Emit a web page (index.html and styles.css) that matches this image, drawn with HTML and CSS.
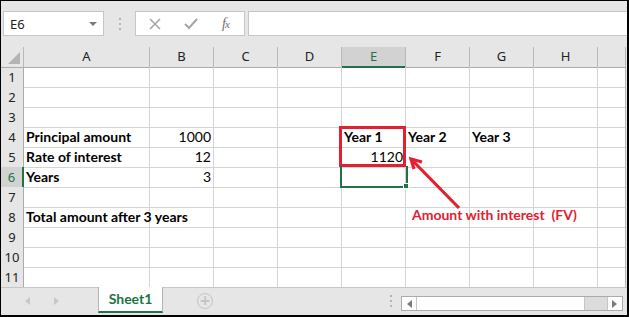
FILE: index.html
```html
<!DOCTYPE html>
<html lang="en">
<head>
    <meta charset="UTF-8">
    <title>Compound interest - Sheet1</title>
    <link rel="stylesheet" href="styles.css">
</head>
<body>
    <div class="window">
        <div class="toolbar">
            <div class="name-box">
                <span>E6</span>
                <span class="caret"></span>
            </div>
            <div class="grip"><i></i><i></i><i></i></div>
            <div class="fx-buttons">
                <svg width="12" height="12" viewBox="0 0 12 12"><path d="M1 1 L11 11 M11 1 L1 11" stroke="#a6a6a6" stroke-width="1.6" fill="none"/></svg>
                <svg width="14" height="12" viewBox="0 0 14 12"><path d="M1 6 L5 10 L13 1" stroke="#a6a6a6" stroke-width="2" fill="none"/></svg>
                <span class="fx">f<sub>x</sub></span>
            </div>
            <div class="formula-input"></div>
        </div>

        <div class="sheet">
            <div class="row head">
                <div class="cell corner"><span class="corner-mark"></span></div>
                <div class="cell">A</div>
                <div class="cell">B</div>
                <div class="cell">C</div>
                <div class="cell">D</div>
                <div class="cell active">E</div>
                <div class="cell">F</div>
                <div class="cell">G</div>
                <div class="cell">H</div>
                <div class="cell"></div>
                <div class="edge"></div>
            </div>
            <div class="row">
                <div class="cell num">1</div>
                <div class="cell"></div><div class="cell"></div><div class="cell"></div><div class="cell"></div><div class="cell"></div><div class="cell"></div><div class="cell"></div><div class="cell"></div><div class="cell"></div>
                <div class="edge"></div>
            </div>
            <div class="row">
                <div class="cell num">2</div>
                <div class="cell"></div><div class="cell"></div><div class="cell"></div><div class="cell"></div><div class="cell"></div><div class="cell"></div><div class="cell"></div><div class="cell"></div><div class="cell"></div>
                <div class="edge"></div>
            </div>
            <div class="row">
                <div class="cell num">3</div>
                <div class="cell"></div><div class="cell"></div><div class="cell"></div><div class="cell"></div><div class="cell"></div><div class="cell"></div><div class="cell"></div><div class="cell"></div><div class="cell"></div>
                <div class="edge"></div>
            </div>
            <div class="row">
                <div class="cell num">4</div>
                <div class="cell bold">Principal amount</div>
                <div class="cell right">1000</div>
                <div class="cell"></div>
                <div class="cell"></div>
                <div class="cell bold">Year 1</div>
                <div class="cell bold">Year 2</div>
                <div class="cell bold">Year 3</div>
                <div class="cell"></div>
                <div class="cell"></div>
                <div class="edge"></div>
            </div>
            <div class="row">
                <div class="cell num">5</div>
                <div class="cell bold">Rate of interest</div>
                <div class="cell right">12</div>
                <div class="cell"></div>
                <div class="cell"></div>
                <div class="cell right">1120</div>
                <div class="cell"></div><div class="cell"></div><div class="cell"></div><div class="cell"></div>
                <div class="edge"></div>
            </div>
            <div class="row">
                <div class="cell num active">6</div>
                <div class="cell bold">Years</div>
                <div class="cell right">3</div>
                <div class="cell"></div><div class="cell"></div><div class="cell"></div><div class="cell"></div><div class="cell"></div><div class="cell"></div><div class="cell"></div>
                <div class="edge"></div>
            </div>
            <div class="row">
                <div class="cell num">7</div>
                <div class="cell"></div><div class="cell"></div><div class="cell"></div><div class="cell"></div><div class="cell"></div><div class="cell"></div><div class="cell"></div><div class="cell"></div><div class="cell"></div>
                <div class="edge"></div>
            </div>
            <div class="row">
                <div class="cell num">8</div>
                <div class="cell bold spill">Total amount after 3 years</div>
                <div class="cell"></div><div class="cell"></div><div class="cell"></div><div class="cell"></div><div class="cell"></div><div class="cell"></div><div class="cell"></div><div class="cell"></div>
                <div class="edge"></div>
            </div>
            <div class="row">
                <div class="cell num">9</div>
                <div class="cell"></div><div class="cell"></div><div class="cell"></div><div class="cell"></div><div class="cell"></div><div class="cell"></div><div class="cell"></div><div class="cell"></div><div class="cell"></div>
                <div class="edge"></div>
            </div>
            <div class="row">
                <div class="cell num">10</div>
                <div class="cell"></div><div class="cell"></div><div class="cell"></div><div class="cell"></div><div class="cell"></div><div class="cell"></div><div class="cell"></div><div class="cell"></div><div class="cell"></div>
                <div class="edge"></div>
            </div>
            <div class="row">
                <div class="cell num">11</div>
                <div class="cell"></div><div class="cell"></div><div class="cell"></div><div class="cell"></div><div class="cell"></div><div class="cell"></div><div class="cell"></div><div class="cell"></div><div class="cell"></div>
                <div class="edge"></div>
            </div>

            <!-- annotations over the grid -->
            <div class="highlight-box"></div>
            <div class="selection"><span class="fill-handle"></span></div>
            <svg class="pointer" width="60" height="60" viewBox="0 0 60 60">
                <path d="M52 54 L5 6" stroke="#e3202f" stroke-width="3.2" fill="none"/>
                <path d="M15 8 L4 5 L7 15" stroke="#e3202f" stroke-width="3.2" fill="none"/>
            </svg>
            <div class="note">Amount with interest&nbsp; (FV)</div>
        </div>

        <div class="tabbar">
            <div class="tab-nav">
                <span class="tri left"></span>
                <span class="tri right"></span>
            </div>
            <div class="tab">Sheet1</div>
            <div class="add-sheet">+</div>
            <div class="grip bottom"><i></i><i></i><i></i></div>
            <div class="hscroll">
                <span class="sbtn"><span class="tri left dark"></span></span>
                <span class="thumb"></span>
                <span class="track"></span>
                <span class="sbtn"><span class="tri right dark"></span></span>
            </div>
        </div>
    </div>
</body>
</html>
```

FILE: styles.css
```css
* {
    margin: 0;
    padding: 0;
    box-sizing: border-box;
}

body {
    background: #fff;
    font-family: 'Lato', 'Liberation Sans', sans-serif;
}

.window {
    width: 629px;
    height: 317px;
    border-top: 1px solid #000;
    border-left: 1px solid #000;
    border-right: 2px solid #000;
    border-bottom: 2px solid #000;
    background: #e6e6e6;
    display: flex;
    flex-direction: column;
    overflow: hidden;
}

/* formula bar */
.toolbar {
    height: 46px;
    flex: none;
    display: flex;
    align-items: flex-start;
    padding: 10px 0 0 2px;
}

.name-box {
    width: 101px;
    height: 25px;
    background: #fff;
    border: 1px solid #c6c6c6;
    display: flex;
    align-items: center;
    justify-content: space-between;
    padding: 0 6px 0 6px;
    font-family: 'Noto Sans', sans-serif;
    font-size: 13px;
    color: #222;
}

.caret {
    width: 0;
    height: 0;
    border-left: 4px solid transparent;
    border-right: 4px solid transparent;
    border-top: 4px solid #7a7a7a;
}

.grip {
    width: 31px;
    height: 25px;
    display: flex;
    flex-direction: column;
    align-items: center;
    justify-content: center;
    gap: 3px;
}

.grip i {
    width: 2px;
    height: 2px;
    background: #b4b4b4;
}

.fx-buttons {
    width: 110px;
    height: 25px;
    background: #fff;
    border: 1px solid #c6c6c6;
    display: flex;
    align-items: center;
    padding-left: 13px;
}

.fx-buttons svg:nth-child(2) {
    margin-left: 23px;
}

.fx {
    margin-left: 24px;
    font-family: 'Liberation Serif', serif;
    font-style: italic;
    font-size: 14px;
    color: #6e6e6e;
}

.fx sub {
    font-size: 11px;
    vertical-align: 0;
    margin-left: -1px;
}

.formula-input {
    flex: 1;
    height: 25px;
    margin-left: 3px;
    background: #fff;
    border: 1px solid #c6c6c6;
    border-right: none;
}

/* grid */
.sheet {
    position: relative;
    flex: none;
}

.row {
    display: grid;
    grid-template-columns: 23px 126px repeat(7, 64px) 28px 1fr;
    height: 20px;
    background: #fff;
}

.cell {
    border-right: 1px solid #d4d4d4;
    border-bottom: 1px solid #d4d4d4;
    font-size: 14px;
    line-height: 19px;
    padding: 0 2px;
    white-space: nowrap;
    color: #000;
}

.edge {
    background: #e6e6e6;
}

.row .cell:nth-child(10) {
    border-right-color: #b4b4b4;
}

.bold {
    font-weight: bold;
}

.right {
    text-align: right;
    padding-right: 2px;
}

.spill {
    overflow: visible;
    position: relative;
    z-index: 1;
}

.head .cell {
    background: #e6e6e6;
    border-right-color: #b9b9b9;
    border-bottom-color: #ababab;
    font-family: 'Noto Sans', sans-serif;
    font-size: 13px;
    line-height: 19px;
    text-align: center;
    color: #222;
}

.head .cell.active {
    background: #d2d2d2;
    color: #217346;
    border-bottom: 2px solid #217346;
}

.corner {
    position: relative;
}

.corner-mark {
    position: absolute;
    right: 3px;
    bottom: 3px;
    width: 0;
    height: 0;
    border-left: 12px solid transparent;
    border-bottom: 12px solid #b4b4b4;
}

.cell.num {
    background: #e6e6e6;
    border-right-color: #ababab;
    border-bottom-color: #d0d0d0;
    font-family: 'Noto Sans', sans-serif;
    font-size: 13px;
    line-height: 20px;
    padding: 0;
    text-align: center;
    color: #222;
}

.cell.num.active {
    background: #d2d2d2;
    color: #217346;
    border-right: 2px solid #217346;
}

/* overlays */
.highlight-box {
    position: absolute;
    left: 338px;
    top: 79px;
    width: 67px;
    height: 41px;
    border: 3px solid #e3202f;
}

.selection {
    position: absolute;
    left: 339px;
    top: 119px;
    width: 68px;
    height: 22px;
    border: 2px solid #217346;
    border-top: none;
}

.fill-handle {
    position: absolute;
    right: -3px;
    bottom: -3px;
    width: 6px;
    height: 6px;
    background: #217346;
    border: 1px solid #fff;
}

.pointer {
    position: absolute;
    left: 406px;
    top: 107px;
}

.note {
    position: absolute;
    left: 411px;
    top: 159px;
    font-weight: bold;
    font-size: 14px;
    color: #e3202f;
    white-space: nowrap;
}

/* sheet tabs and scroll */
.tabbar {
    flex: 1;
    display: flex;
    align-items: flex-start;
    border-top: 1px solid #c6c6c6;
    position: relative;
}

.tab-nav {
    width: 97px;
    height: 26px;
    display: flex;
    align-items: center;
    padding-left: 24px;
    gap: 24px;
}

.tri {
    width: 0;
    height: 0;
    border-top: 4px solid transparent;
    border-bottom: 4px solid transparent;
}

.tri.left {
    border-right: 5px solid #c8c8c8;
}

.tri.right {
    border-left: 5px solid #c8c8c8;
}

.tri.left.dark {
    border-right-color: #7a7a7a;
}

.tri.right.dark {
    border-left-color: #7a7a7a;
}

.tab {
    width: 65px;
    height: 26px;
    margin-top: -1px;
    background: #fff;
    border-left: 1px solid #b4b4b4;
    border-right: 1px solid #b4b4b4;
    border-bottom: 2px solid #217346;
    text-align: center;
    font-weight: bold;
    font-size: 14px;
    line-height: 24px;
    color: #217346;
}

.add-sheet {
    width: 16px;
    height: 16px;
    margin: 5px 0 0 34px;
    border: 1.5px solid #c4c4c4;
    border-radius: 50%;
    color: #c4c4c4;
    font-family: 'DejaVu Sans', sans-serif;
    font-size: 14px;
    line-height: 12px;
    text-align: center;
    font-weight: bold;
}

.grip.bottom {
    width: 12px;
    height: 16px;
    margin: 5px 0 0 172px;
}

.hscroll {
    display: flex;
    width: 222px;
    height: 15px;
    margin: 8px 0 0 4px;
    border: 1px solid #ababab;
    background: #fff;
}

.sbtn {
    width: 14px;
    display: flex;
    align-items: center;
    justify-content: center;
    background: #fff;
}

.thumb {
    width: 169px;
    border-left: 1px solid #c6c6c6;
    border-right: 1px solid #c6c6c6;
    background: #fff;
}

.track {
    flex: 1;
    background: #dcdcdc;
    border-right: 1px solid #c6c6c6;
}
```
